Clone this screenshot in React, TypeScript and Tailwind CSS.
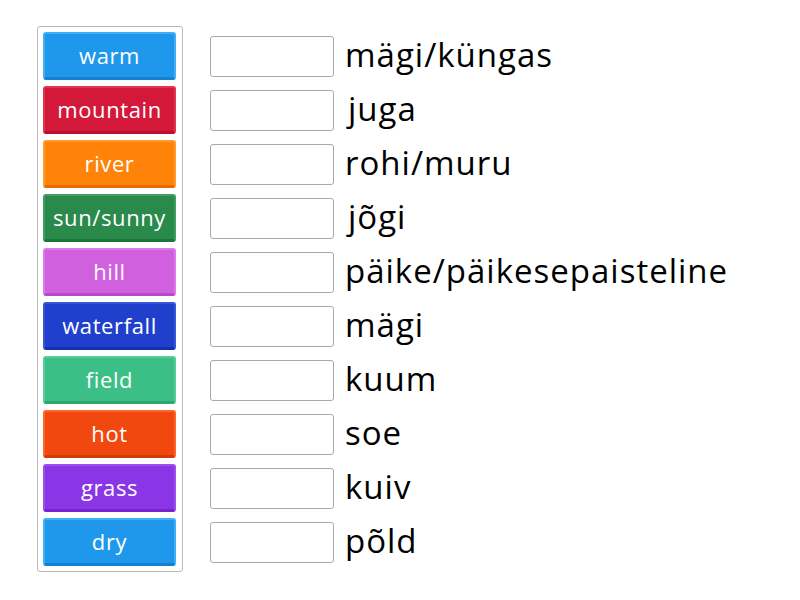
const tiles = [
  { label: 'warm', cls: 'bg-[#1f98ec] border-[#3fb0f7] border-b-[#1580d0]' },
  { label: 'mountain', cls: 'bg-[#d3183a] border-[#e0344f] border-b-[#b8102e]' },
  { label: 'river', cls: 'bg-[#ff8309] border-[#ff9a2c] border-b-[#e56c00]' },
  { label: 'sun/sunny', cls: 'bg-[#2a8a4c] border-[#3e9f60] border-b-[#1f733d]' },
  { label: 'hill', cls: 'bg-[#d160df] border-[#dc7ae8] border-b-[#b94ac7]' },
  { label: 'waterfall', cls: 'bg-[#1f3fcc] border-[#3556d8] border-b-[#1630ad]' },
  { label: 'field', cls: 'bg-[#3cbf86] border-[#57cd98] border-b-[#2ca672]' },
  { label: 'hot', cls: 'bg-[#f1480f] border-[#fb6630] border-b-[#d23a06]' },
  { label: 'grass', cls: 'bg-[#8a35e6] border-[#9a4ff0] border-b-[#7424cc]' },
  { label: 'dry', cls: 'bg-[#1f98ec] border-[#3fb0f7] border-b-[#1580d0]' },
];

const words = [
  'mägi/küngas',
  'juga',
  'rohi/muru',
  'jõgi',
  'päike/päikesepaisteline',
  'mägi',
  'kuum',
  'soe',
  'kuiv',
  'põld',
];

export default function App() {
  return (
    <div className="w-[800px] h-[600px] bg-white flex items-start font-['Open_Sans','Lato',sans-serif]">
      <div className="ml-[37px] mt-[26px] w-[146px] border border-[#b9b9b9] rounded-[3px] pl-[5px] pr-[6px] py-[5px] flex flex-col gap-[6px]">
        {tiles.map((t) => (
          <div
            key={t.label}
            className={`h-[48px] rounded-[3px] border-2 border-b-[3px] flex items-center justify-center text-white text-[22px] leading-none pb-[1px] tracking-[0.6px] ${t.cls}`}
          >
            {t.label}
          </div>
        ))}
      </div>

      <div className="ml-[27px] mt-[36px] flex flex-col gap-[13px]">
        {words.map((w, i) => (
          <div key={i} className="flex items-center h-[41px]">
            <div className="w-[124px] h-[41px] border border-[#a9a9a9] rounded-[3px] bg-white shrink-0" />
            <span className={`text-[33px] leading-none tracking-[1px] text-black pb-[4px] ${w.startsWith('j') ? 'ml-[14px]' : 'ml-[11px]'}`}>
              {w}
            </span>
          </div>
        ))}
      </div>
    </div>
  );
}
